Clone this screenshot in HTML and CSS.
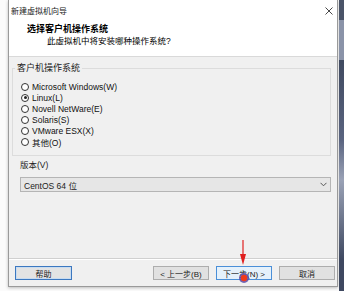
FILE: index.html
```html
<!DOCTYPE html>
<html lang="zh">
<head>
<meta charset="utf-8">
<link rel="stylesheet" href="styles.css">
</head>
<body>
<div class="desk">
  <div class="window">
    <div class="titlebar">
      <span class="title">新建虚拟机向导</span>
      <svg class="close" width="8" height="8" viewBox="0 0 8 8"><path d="M0.5 0.5L7.5 7.5M7.5 0.5L0.5 7.5" stroke="#333" stroke-width="0.9"/></svg>
    </div>
    <div class="header">
      <div class="h1">选择客户机操作系统</div>
      <div class="h2">此虚拟机中将安装哪种操作系统?</div>
    </div>
    <div class="content">
      <div class="group">
        <div class="legend">客户机操作系统</div>
        <div class="radio"><span class="dot"></span>Microsoft Windows(W)</div>
        <div class="radio"><span class="dot on"></span>Linux(L)</div>
        <div class="radio"><span class="dot"></span>Novell NetWare(E)</div>
        <div class="radio"><span class="dot"></span>Solaris(S)</div>
        <div class="radio"><span class="dot"></span>VMware ESX(X)</div>
        <div class="radio"><span class="dot"></span>其他(O)</div>
      </div>
      <div class="ver-label">版本(V)</div>
      <div class="combo">
        <span>CentOS 64 位</span>
        <svg width="7" height="5" viewBox="0 0 7 5"><path d="M0.5 0.8L3.5 3.8L6.5 0.8" fill="none" stroke="#555" stroke-width="1"/></svg>
      </div>
    </div>
    <div class="footer">
      <div class="btn focus help">帮助</div>
      <div class="spacer"></div>
      <div class="btn back">&lt; 上一步(B)</div>
      <div class="btn hover next">下一步(N) &gt;</div>
      <div class="btn cancel">取消</div>
    </div>
  </div>
  <div class="strip"></div>
  <svg class="pointer" width="20" height="60" viewBox="0 0 20 60">
    <path d="M9 0L9 16" stroke="#e02020" stroke-width="1.2"/>
    <path d="M6 14L12 14L9 25Z" fill="#e02020"/>
    <circle cx="10" cy="38" r="5" fill="#5a4aa8" opacity="0.85"/>
    <circle cx="10" cy="38" r="3.2" fill="#f03a1a"/>
  </svg>
</div>
</body>
</html>
```
FILE: styles.css
```css
* { box-sizing: border-box; }
html, body { margin: 0; padding: 0; background: #fff; }
body {
  width: 344px;
  height: 291px;
  overflow: hidden;
  font-family: "Liberation Sans", "Noto Sans CJK SC", sans-serif;
  font-size: 8.5px;
  color: #000;
}
.desk {
  position: relative;
  width: 344px;
  height: 291px;
  display: flex;
  align-items: flex-start;
  background: #fbfbfb;
}
.window {
  margin-left: 8px;
  width: 330px;
  height: 287px;
  border: 1px solid #9a9a9a;
  border-top: none;
  background: #fff;
  display: flex;
  flex-direction: column;
  box-shadow: 0 1px 3px rgba(0,0,0,0.25);
}
.titlebar {
  height: 20px;
  display: flex;
  align-items: center;
  justify-content: space-between;
  padding: 0 4px 0 2px;
  background: #fff;
}
.title { font-size: 8px; color: #222; }
.close { margin-top: 2px; }
.header {
  height: 37px;
  background: #fff;
  border-bottom: 1px solid #d9d9d9;
  padding-top: 4px;
}
.h1 {
  font-weight: bold;
  font-size: 9px;
  padding-left: 18px;
  line-height: 11px;
}
.h2 {
  padding-left: 38px;
  margin-top: 1px;
  line-height: 11px;
}
.content {
  flex: 1;
  background: #f0f0f0;
  border-bottom: 1px solid #d0d0d0;
  padding: 11px 6px 0 3px;
  display: flex;
  flex-direction: column;
}
.group {
  position: relative;
  border: 1px solid #dcdcdc;
  padding: 12px 0 8px 8px;
  height: 88px;
}
.legend {
  position: absolute;
  top: -6px;
  left: 2px;
  padding: 0 2px;
  background: #f0f0f0;
  line-height: 11px;
  font-size: 9px;
  color: #222;
}
.radio {
  display: flex;
  align-items: center;
  height: 11px;
  color: #111;
}
.dot {
  width: 8px;
  height: 8px;
  border: 1px solid #333;
  border-radius: 50%;
  background: #fff;
  margin-right: 3px;
  position: relative;
}
.dot.on::after {
  content: "";
  position: absolute;
  left: 1.5px;
  top: 1.5px;
  width: 3px;
  height: 3px;
  border-radius: 50%;
  background: #222;
}
.ver-label {
  margin: 4px 0 0 8px;
  line-height: 11px;
  color: #222;
}
.combo {
  margin: 6px 0 0 8px;
  height: 15px;
  border: 1px solid #b5b5b5;
  background: #e6e6e6;
  display: flex;
  align-items: center;
  justify-content: space-between;
  padding: 0 3px 0 3px;
  color: #222;
}
.footer {
  height: 27px;
  background: #f0f0f0;
  display: flex;
  align-items: flex-start;
  padding: 6px 2px 0 6px;
  gap: 7px;
  border-top: 1px solid #fff;
}
.spacer { flex: 1; }
.btn {
  height: 14px;
  width: 56px;
  border: 1px solid #adadad;
  background: #e1e1e1;
  display: flex;
  align-items: center;
  justify-content: center;
  font-size: 8px;
  color: #222;
}
.btn.focus { border: 1px solid #3c78c0; box-shadow: inset 0 0 0 1px #c9dcf0; background: #e3e3e3; width: 57px; }
.btn.hover { border-color: #4a8fd8; background: #e5f1fb; }
.help { margin-right: 0; }
.strip {
  margin-left: 1px;
  width: 5px;
  height: 291px;
  background: linear-gradient(#4a5468 0, #4a5468 20px, #8a93a8 20px, #8a93a8 60px, #404a60 60px, #5a6480 140px, #9aa2b6 180px, #3e4860 260px);
}
.pointer {
  position: absolute;
  left: 234px;
  top: 240px;
}
```
